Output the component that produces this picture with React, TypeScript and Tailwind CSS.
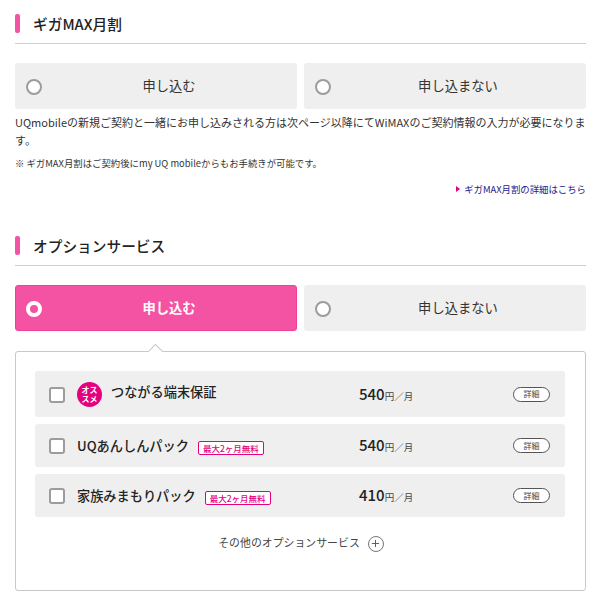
import { Plus } from "lucide-react";

const font = { fontFamily: '"Noto Sans CJK JP", sans-serif' };

const Heading = ({ title }: { title: string }) => (
    <div className="box-content flex h-[29px] items-center gap-[13px] border-b border-[#cfcfcf] pb-[5px]">
        <span className="h-[19px] w-[5px] rounded-[2px] bg-[#f452a2]" />
        <h2 className="text-[14.7px] leading-[20px] font-medium text-[#222]">{title}</h2>
    </div>
);

const Radio = ({ label, active }: { label: string; active?: boolean }) => (
    <div
        className={`relative flex h-[46px] items-center justify-center rounded-[3px] pl-[26px] text-[13.3px] ${
            active ? "border border-[#f0409a] bg-[#f452a2] font-bold text-white" : "bg-[#efefef] text-[#333]"
        }`}
    >
        <span
            className={`absolute h-[16px] w-[16px] rounded-full ${
                active
                    ? "left-[10px] top-[15px] border-[4px] border-white bg-[#f452a2]"
                    : "left-[11px] top-[16px] border-2 border-[#9c9c9c] bg-white"
            }`}
        />
        {label}
    </div>
);

const RadioPair = ({ selected }: { selected?: boolean }) => (
    <div className="grid grid-cols-2 gap-[7px]">
        <Radio label="申し込む" active={selected} />
        <Radio label="申し込まない" />
    </div>
);

const OptionRow = ({
    name,
    price,
    recommended,
    free,
    height,
}: {
    name: string;
    price: string;
    recommended?: boolean;
    free?: boolean;
    height: string;
}) => (
    <div className={`flex items-center rounded-[3px] bg-[#efefef] pl-[14px] pr-[15px] ${height}`}>
        <span className="mt-[1px] h-[16px] w-[16px] shrink-0 rounded-[3px] border-2 border-[#9c9c9c] bg-white" />
        <div className="ml-[12px] flex w-[282px] items-center">
            {recommended && (
                <span className="mr-[9px] flex h-[25px] w-[25px] shrink-0 items-center justify-center rounded-full bg-[#e6007e] text-center text-[8px] leading-[9px] font-bold text-white">
                    オス
                    <br />
                    スメ
                </span>
            )}
            <span className={`text-[13.2px] leading-[20px] font-medium text-[#222] ${recommended ? "mb-[4px]" : ""}`}>
                {name}
            </span>
            {free && (
                <span className="ml-[9px] mt-[4px] rounded-[2px] border border-[#e6007e] bg-white px-[4px] text-[8.5px] leading-[12px] font-medium text-[#e6007e]">
                    最大2ヶ月無料
                </span>
            )}
        </div>
        <div className="flex items-baseline text-[#222]">
            <span className="text-[15px] font-medium">{price}</span>
            <span className="text-[9.5px] text-[#444]">円／月</span>
        </div>
        <span className="ml-auto flex h-[15px] w-[37px] items-center justify-center rounded-full border border-[#555] bg-white text-[8px] text-[#444]">
            詳細
        </span>
    </div>
);

export default function App() {
    return (
        <div style={font} className="h-[609px] w-[600px] overflow-hidden bg-white pl-[15px] pr-[14px] pt-[9px] text-[#333]">
            <Heading title="ギガMAX月割" />
            <div className="mt-[19px]">
                <RadioPair />
            </div>
            <p className="mt-[4px] text-[11px] leading-[18px]">
                UQmobileの新規ご契約と一緒にお申し込みされる方は次ページ以降にてWiMAXのご契約情報の入力が必要になります。
            </p>
            <p className="mt-[6px] text-[9.4px] leading-[16px]">※ ギガMAX月割はご契約後にmy UQ mobileからもお手続きが可能です。</p>
            <div className="mt-[10px] flex items-center justify-end gap-[4px] text-[9.4px] leading-[16px] text-[#1d2088]">
                <span className="h-0 w-0 border-y-[3px] border-l-[4px] border-y-transparent border-l-[#e6007e]" />
                ギガMAX月割の詳細はこちら
            </div>

            <div className="mt-[34px]">
                <Heading title="オプションサービス" />
            </div>
            <div className="mt-[19px]">
                <RadioPair selected />
            </div>

            <div className="relative mt-[20px] h-[240px] rounded-[3px] border border-[#c8c8c8] pl-[19px] pr-[20px] pt-[19px]">
                <span className="absolute left-[134px] top-[-6px] h-[11px] w-[11px] rotate-45 border-l border-t border-[#c8c8c8] bg-white" />
                <div className="flex flex-col gap-[7px]">
                    <OptionRow name="つながる端末保証" price="540" recommended height="h-[46px]" />
                    <OptionRow name="UQあんしんパック" price="540" free height="h-[43px]" />
                    <OptionRow name="家族みまもりパック" price="410" free height="h-[43px]" />
                </div>
                <div className="mt-[15px] flex items-center justify-center gap-[8px] pl-[2px] text-[10.9px] leading-[20px] text-[#444]">
                    その他のオプションサービス
                    <span className="mt-[3px] flex h-[16px] w-[16px] items-center justify-center rounded-full border border-[#777]">
                        <Plus size={11} strokeWidth={2} color="#555" />
                    </span>
                </div>
            </div>
        </div>
    );
}
